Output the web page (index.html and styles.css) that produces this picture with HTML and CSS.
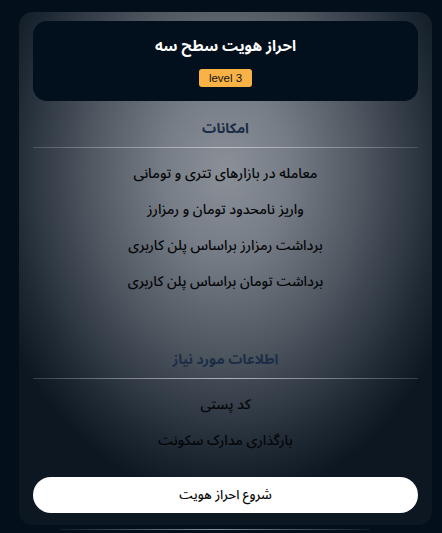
FILE: index.html
```html
<!DOCTYPE html>
<html lang="fa" dir="rtl">
<head>
<meta charset="utf-8">
<link rel="stylesheet" href="styles.css">
</head>
<body>
<div class="page">
  <div class="card">
    <div class="head">
      <div class="head-title">احراز هویت سطح سه</div>
      <div class="badge" dir="ltr">level 3</div>
    </div>
    <div class="section">
      <div class="sec-title">امکانات</div>
      <div class="divider"></div>
      <ul class="items">
        <li>معامله در بازارهای تتری و تومانی</li>
        <li>واریز نامحدود تومان و رمزارز</li>
        <li>برداشت رمزارز براساس پلن کاربری</li>
        <li>برداشت تومان براساس پلن کاربری</li>
      </ul>
    </div>
    <div class="section second">
      <div class="sec-title">اطلاعات مورد نیاز</div>
      <div class="divider"></div>
      <ul class="items">
        <li>کد پستی</li>
        <li>بارگذاری مدارک سکونت</li>
      </ul>
    </div>
    <button class="btn">شروع احراز هویت</button>
  </div>
  <div class="bottom-line"></div>
</div>
</body>
</html>
```
FILE: styles.css
```css
html, body {
  margin: 0;
  padding: 0;
  background: #03101c;
  height: 100%;
  overflow: hidden;
}
body {
  font-family: "Noto Sans Arabic", "DejaVu Sans", sans-serif;
}
.page {
  padding: 12px 10px 0 19px;
  display: flex;
  flex-direction: column;
  align-items: flex-start;
}
.card {
  width: 413px;
  height: 513px;
  box-sizing: border-box;
  border-radius: 14px;
  padding: 9px 14px 0;
  display: flex;
  flex-direction: column;
  background:
    radial-gradient(ellipse 250px 330px at 50% 31%, #8b9098 0%, #767d86 25%, #4e5660 55%, #202a35 85%, #0c1722 100%);
}
.head {
  height: 80px;
  background: #020f1c;
  border-radius: 14px;
  display: flex;
  flex-direction: column;
  align-items: center;
  box-sizing: border-box;
  padding-top: 15px;
}
.head-title {
  color: #fff;
  font-weight: bold;
  font-size: 15px;
  line-height: 21px;
}
.badge {
  margin-top: 12px;
  width: 53px;
  height: 18px;
  background: #f8b245;
  border-radius: 3px;
  font-family: "Liberation Sans", Arial, sans-serif;
  font-size: 11.5px;
  line-height: 18px;
  text-align: center;
  color: #111;
}
.section {
  margin-top: 18px;
}
.section.second {
  margin-top: 50px;
}
.sec-title {
  text-align: center;
  font-weight: bold;
  font-size: 14px;
  line-height: 20px;
  color: #1b2d47;
}
.divider {
  margin-top: 8px;
  height: 1px;
  background: linear-gradient(90deg, rgba(170,176,184,0.25), rgba(200,205,210,0.8) 50%, rgba(170,176,184,0.25));
}
.items {
  list-style: none;
  margin: 8px 0 0;
  padding: 0;
}
.items li {
  text-align: center;
  font-size: 14px;
  font-weight: 500;
  line-height: 36px;
  color: #040507;
}
.btn {
  margin-top: 18px;
  height: 36px;
  border: none;
  border-radius: 18px;
  background: #fff;
  font-family: "Noto Sans Arabic", "DejaVu Sans", sans-serif;
  font-size: 13px;
  font-weight: 500;
  color: #0a0a0a;
  padding: 0;
}
.bottom-line {
  align-self: flex-end;
  margin-top: 4px;
  margin-left: 41px;
  width: 310px;
  height: 1px;
  background: linear-gradient(90deg, rgba(150,160,170,0.1), rgba(190,200,210,0.7) 50%, rgba(150,160,170,0.1));
}
```
